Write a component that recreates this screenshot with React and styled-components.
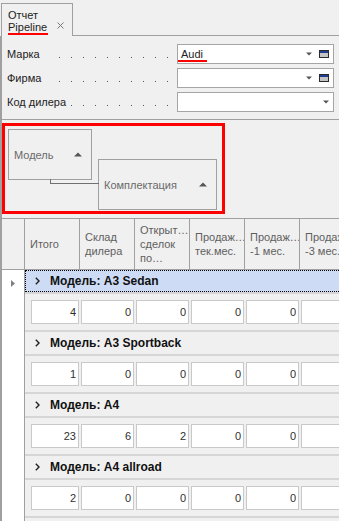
import styled, { createGlobalStyle } from 'styled-components';

const GlobalStyle = createGlobalStyle`
  html, body { margin: 0; padding: 0; background: #f0f0f0; overflow: hidden; }
  body { font-family: 'Liberation Sans', Arial, sans-serif; font-size: 11px; color: #222; }
  * { box-sizing: border-box; }
`;

const filters = [
  { label: 'Марка', value: 'Audi', icon: true },
  { label: 'Фирма', value: '', icon: true },
  { label: 'Код дилера', value: '', icon: false },
];

const headers = [
  ['Итого'],
  ['Склад', 'дилера'],
  ['Открыт…', 'сделок', 'по…'],
  ['Продаж…', 'тек.мес.'],
  ['Продаж…', '-1 мес.'],
  ['Продаж…', '-3 мес.'],
];

const groups = [
  { name: 'A3 Sedan', values: [4, 0, 0, 0, 0, 0], selected: true },
  { name: 'A3 Sportback', values: [1, 0, 0, 0, 0, 0] },
  { name: 'A4', values: [23, 6, 2, 0, 0, 0] },
  { name: 'A4 allroad', values: [2, 0, 0, 0, 0, 0] },
  { name: 'A5 Sportback', values: [3, 0, 0, 0, 0, 0] },
];

function DropArrow() {
  return (
    <svg width="6" height="4" viewBox="0 0 6 4">
      <polygon points="0,0.5 6,0.5 3,3.5" fill="#555" />
    </svg>
  );
}

function WindowIcon() {
  return (
    <svg width="10" height="8" viewBox="0 0 10 8">
      <rect x="0.5" y="0.5" width="9" height="7" fill="#c4c4c4" stroke="#2b2b2b" />
      <rect x="1" y="1" width="8" height="2" fill="#1f3d91" />
    </svg>
  );
}

function UpArrow() {
  return (
    <svg width="8" height="5" viewBox="0 0 8 5">
      <polygon points="0,4.5 4,0.5 8,4.5" fill="#555" />
    </svg>
  );
}

export default function App() {
  return (
    <Page>
      <GlobalStyle />
      <TabStrip>
        <Tab>
          <TabTitle>
            <span>Отчет</span>
            <Marked>Pipeline</Marked>
          </TabTitle>
          <Close width="7" height="7" viewBox="0 0 7 7">
            <path d="M0.5 0.5 L6.5 6.5 M6.5 0.5 L0.5 6.5" stroke="#777" strokeWidth="1" />
          </Close>
        </Tab>
        <StripRest />
      </TabStrip>

      <Content>
        <FilterPanel>
          {filters.map((f) => (
            <FieldRow key={f.label}>
              <LabelCell>
                <Leaders />
                <LabelText>{f.label}</LabelText>
              </LabelCell>
              <Select>
                <SelectValue>{f.value && <Marked $pad>{f.value}</Marked>}</SelectValue>
                <DropArrow />
                {f.icon && <IconSlot><WindowIcon /></IconSlot>}
              </Select>
            </FieldRow>
          ))}
        </FilterPanel>

        <GroupPanel>
          <GroupBox $width={84}>
            <span>Модель</span>
            <UpArrow />
          </GroupBox>
          <GroupBox $width={119} $nested>
            <span>Комплектация</span>
            <UpArrow />
          </GroupBox>
        </GroupPanel>

        <Grid>
          <GridHeader>
            <HeaderCorner />
            {headers.map((lines, i) => (
              <HeaderCell key={i}>
                <div>
                  {lines.map((l) => (
                    <div key={l}>{l}</div>
                  ))}
                </div>
              </HeaderCell>
            ))}
          </GridHeader>
          <GridBody>
            <Indicator>
              <svg width="4" height="7" viewBox="0 0 4 7">
                <polygon points="0,0 4,3.5 0,7" fill="#808080" />
              </svg>
            </Indicator>
            <Rows>
              {groups.map((g) => (
                <div key={g.name}>
                  <GroupRow>
                    <GroupInner $selected={g.selected}>
                      <svg width="5" height="8" viewBox="0 0 5 8">
                        <polyline points="0.8,0.8 4,4 0.8,7.2" fill="none" stroke="#222" strokeWidth="1.4" />
                      </svg>
                      <GroupText>Модель: {g.name}</GroupText>
                    </GroupInner>
                  </GroupRow>
                  <DataRow>
                    {g.values.map((v, i) => (
                      <Cell key={i} $width={i === 0 ? 48 : 53}>{v}</Cell>
                    ))}
                  </DataRow>
                </div>
              ))}
            </Rows>
          </GridBody>
        </Grid>
      </Content>
    </Page>
  );
}

const Page = styled.div`
  width: 339px;
  height: 521px;
  overflow: hidden;
  display: flex;
  flex-direction: column;
`;

const TabStrip = styled.div`
  display: flex;
  align-items: flex-end;
  height: 36px;
  flex-shrink: 0;
`;

const Tab = styled.div`
  margin-left: 1px;
  width: 72px;
  height: 33px;
  border: 1px solid #a0a0a0;
  border-bottom: none;
  padding: 5px 0 0 6px;
  display: flex;
  align-items: flex-start;
`;

const TabTitle = styled.div`
  display: flex;
  flex-direction: column;
  align-items: flex-start;
  line-height: 13px;
  color: #222;
`;

const Marked = styled.span`
  display: inline-block;
  line-height: 11px;
  padding: ${(p) => (p.$pad ? '0 4px 0 3px' : '0 1px 0 0')};
  border-bottom: 2px solid #ff0000;
`;

const Close = styled.svg`
  margin: 13px 0 0 9px;
`;

const StripRest = styled.div`
  flex: 1;
  height: 100%;
  border-bottom: 1px solid #a0a0a0;
`;

const Content = styled.div`
  flex: 1;
  display: flex;
  flex-direction: column;
  border-left: 2px solid #a0a0a0;
  min-height: 0;
`;

const FilterPanel = styled.div`
  display: flex;
  flex-direction: column;
  gap: 4px;
  padding: 8px 0 7px 5px;
  border-bottom: 1px solid #a0a0a0;
`;

const FieldRow = styled.div`
  display: grid;
  grid-template-columns: 170px 157px;
  height: 20px;
`;

const LabelCell = styled.div`
  display: grid;
`;

const Leaders = styled.div`
  grid-area: 1 / 1;
  margin-left: 52px;
  width: 110px;
  background-image: linear-gradient(90deg, #555 1px, transparent 1px);
  background-size: 12px 1px;
  background-repeat: repeat-x;
  background-position: 0 13px;
`;

const LabelText = styled.span`
  grid-area: 1 / 1;
  justify-self: start;
  align-self: center;
  padding-right: 5px;
  background: #f0f0f0;
  color: #222;
`;

const Select = styled.div`
  display: flex;
  align-items: center;
  border: 1px solid #a5a5a5;
  background: #fff;
  padding: 0 4px 0 0;
`;

const SelectValue = styled.div`
  flex: 1;
  padding-top: 2px;
`;

const IconSlot = styled.div`
  display: flex;
  margin-left: 7px;
`;

const GroupPanel = styled.div`
  margin-top: 3px;
  width: 223px;
  height: 91px;
  border: 3px solid #ff0000;
  display: flex;
  align-items: flex-start;
  padding: 3px 0 0 3px;
  flex-shrink: 0;
`;

const GroupBox = styled.div`
  position: relative;
  width: ${(p) => p.$width}px;
  height: 51px;
  margin: ${(p) => (p.$nested ? '30px 0 0 6px' : '0')};
  border: 1px solid #a0a0a0;
  display: flex;
  align-items: center;
  justify-content: space-between;
  padding: 0 9px 0 5px;
  color: #6a6a6a;

  ${(p) =>
    p.$nested &&
    `
    &::before {
      content: '';
      position: absolute;
      left: -49px;
      top: 19px;
      width: 48px;
      height: 4px;
      border-left: 1px solid #707070;
      border-bottom: 1px solid #707070;
    }
  `}
`;

const Grid = styled.div`
  margin-top: 4px;
  flex: 1;
  display: flex;
  flex-direction: column;
  min-height: 0;
`;

const GridHeader = styled.div`
  display: flex;
  height: 52px;
  flex-shrink: 0;
  border-top: 1px solid #a0a0a0;
  border-bottom: 1px solid #a0a0a0;
`;

const HeaderCorner = styled.div`
  width: 23px;
  flex-shrink: 0;
  border-right: 1px solid #a0a0a0;
`;

const HeaderCell = styled.div`
  width: 55px;
  flex-shrink: 0;
  border-right: 1px solid #a0a0a0;
  padding-left: 5px;
  display: flex;
  align-items: center;
  line-height: 14px;
  color: #5f5f5f;
  white-space: nowrap;
  overflow: hidden;
`;

const GridBody = styled.div`
  flex: 1;
  display: flex;
  min-height: 0;
`;

const Indicator = styled.div`
  width: 23px;
  flex-shrink: 0;
  background: #fff;
  border-right: 1px solid #a0a0a0;
  padding: 7px 0 0 9px;
`;

const Rows = styled.div`
  flex: 1;
  min-width: 0;
  overflow: hidden;
`;

const GroupRow = styled.div`
  height: 24px;
  border-bottom: 2px solid #d6d6d6;
`;

const GroupInner = styled.div`
  height: 22px;
  display: flex;
  align-items: center;
  gap: 10px;
  padding-left: 9px;
  background: ${(p) => (p.$selected ? '#cddcf4' : '#f0f0f0')};
  border: 1px dotted ${(p) => (p.$selected ? '#000' : 'transparent')};
  border-right: none;
`;

const GroupText = styled.span`
  font-size: 12px;
  font-weight: bold;
  color: #111;
  white-space: nowrap;
`;

const DataRow = styled.div`
  display: flex;
  height: 38px;
  padding: 6px 0 6px 6px;
  border-bottom: 2px solid #d6d6d6;
`;

const Cell = styled.div`
  width: ${(p) => p.$width}px;
  height: 24px;
  flex-shrink: 0;
  margin-right: 2px;
  background: #fff;
  border: 1px solid #c9c9c9;
  text-align: right;
  padding-right: 2px;
  line-height: 22px;
  color: #303030;
`;
